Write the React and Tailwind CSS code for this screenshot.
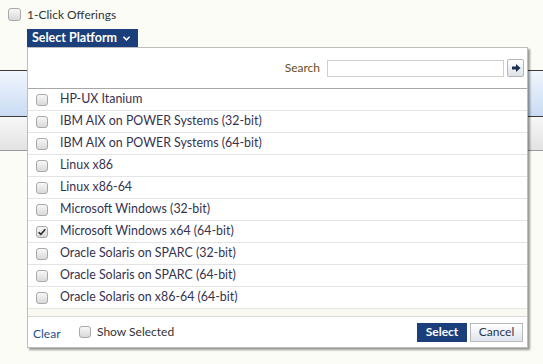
import { useState } from "react";

const PLATFORMS = [
  "HP-UX Itanium",
  "IBM AIX on POWER Systems (32-bit)",
  "IBM AIX on POWER Systems (64-bit)",
  "Linux x86",
  "Linux x86-64",
  "Microsoft Windows (32-bit)",
  "Microsoft Windows x64 (64-bit)",
  "Oracle Solaris on SPARC (32-bit)",
  "Oracle Solaris on SPARC (64-bit)",
  "Oracle Solaris on x86-64 (64-bit)",
];

function Box({ checked, big }) {
  return (
    <span
      className={`relative shrink-0 flex items-center justify-center rounded-[3px] border border-[#a9a9a9] bg-gradient-to-b from-[#f7f7f7] to-[#d9d9d9] ${
        big ? "w-[13px] h-[13px]" : "w-[12px] h-[12px]"
      }`}
    >
      {checked && (
        <svg viewBox="0 0 12 12" className="w-[10px] h-[10px]">
          <path d="M2 6.2 L4.6 8.8 L10 2.8" fill="none" stroke="#2b2b2b" strokeWidth="1.8" />
        </svg>
      )}
    </span>
  );
}

export default function App() {
  const [selected, setSelected] = useState({ "Microsoft Windows x64 (64-bit)": true });

  return (
    <div className="relative w-[543px] h-[364px] overflow-hidden bg-[#fcfcf7] font-['Lato',sans-serif] text-[12px]">
      {/* top controls */}
      <div className="flex items-center gap-[6px] pl-[8px] pt-[8px] h-[21px] text-[#333]">
        <Box big />
        <span>1-Click Offerings</span>
      </div>
      <div className="ml-[27px] mt-[8px] w-[111px] h-[18px] bg-[#1b3f7b] text-white font-bold text-[12.5px] flex items-center pl-[5px] gap-[5px]">
        <span>Select Platform</span>
        <svg viewBox="0 0 10 8" className="w-[9px] h-[7px]">
          <path d="M1.5 2 L5 5.5 L8.5 2" fill="none" stroke="#fff" strokeWidth="1.8" />
        </svg>
      </div>

      {/* page bands behind the menu */}
      <div className="mt-[23px] h-[47px] border-t border-b border-[#3a3a3a] bg-gradient-to-b from-[#f1f6fd] to-[#c9dbf3]" />
      <div className="h-[34px] border-b border-[#9a9a9a] bg-gradient-to-b from-[#f7f7f7] to-[#e3e3e3]" />

      {/* platform menu */}
      <div className="absolute left-[27px] top-[47px] w-[501px] h-[301px] bg-white border border-[#bdbdbd] shadow-[2px_2px_2px_rgba(0,0,0,0.4)] flex flex-col">
        <div className="h-[40px] flex items-center justify-end pr-[3px]">
          <span className="text-[#6a4f22]">Search</span>
          <input className="ml-[7px] w-[177px] h-[17px] border border-[#cfcfcf] outline-none" />
          <span className="ml-[3px] w-[17px] h-[18px] border border-[#b5b5b5] rounded-[2px] bg-gradient-to-b from-[#ffffff] to-[#dde3ea] flex items-center justify-center">
            <svg viewBox="0 0 10 10" className="w-[10px] h-[10px]">
              <path d="M1 3.5 H5 V1 L9.5 5 L5 9 V6.5 H1 Z" fill="#1d2f4a" />
            </svg>
          </span>
        </div>
        <div className="h-[229px] border-t border-[#a8a8a8] border-b border-b-[#d8d8d8] bg-[#fafaf2]">
          {PLATFORMS.map((p) => (
            <div
              key={p}
              onClick={() => setSelected({ ...selected, [p]: !selected[p] })}
              className="h-[22px] bg-white border-b border-[#e4e4e4] flex items-center pl-[8px] gap-[12px] text-[12.4px] text-[#35324f]"
            >
              <Box checked={!!selected[p]} />
              <span>{p}</span>
            </div>
          ))}
        </div>
        <div className="flex-1 flex items-center pl-[5px] pr-[4px]">
          <span className="w-[46px] text-[#22508f] mt-[3px]">Clear</span>
          <span className="flex items-center gap-[6px] text-[#333]">
            <Box />
            <span>Show Selected</span>
          </span>
          <span className="ml-auto w-[50px] h-[19px] bg-[#1b3f7b] text-white font-bold flex items-center justify-center">
            Select
          </span>
          <span className="ml-[3px] w-[53px] h-[19px] border border-[#b9b9b9] bg-gradient-to-b from-[#ffffff] to-[#dfe5ee] text-[#2a3550] flex items-center justify-center">
            Cancel
          </span>
        </div>
      </div>
    </div>
  );
}
